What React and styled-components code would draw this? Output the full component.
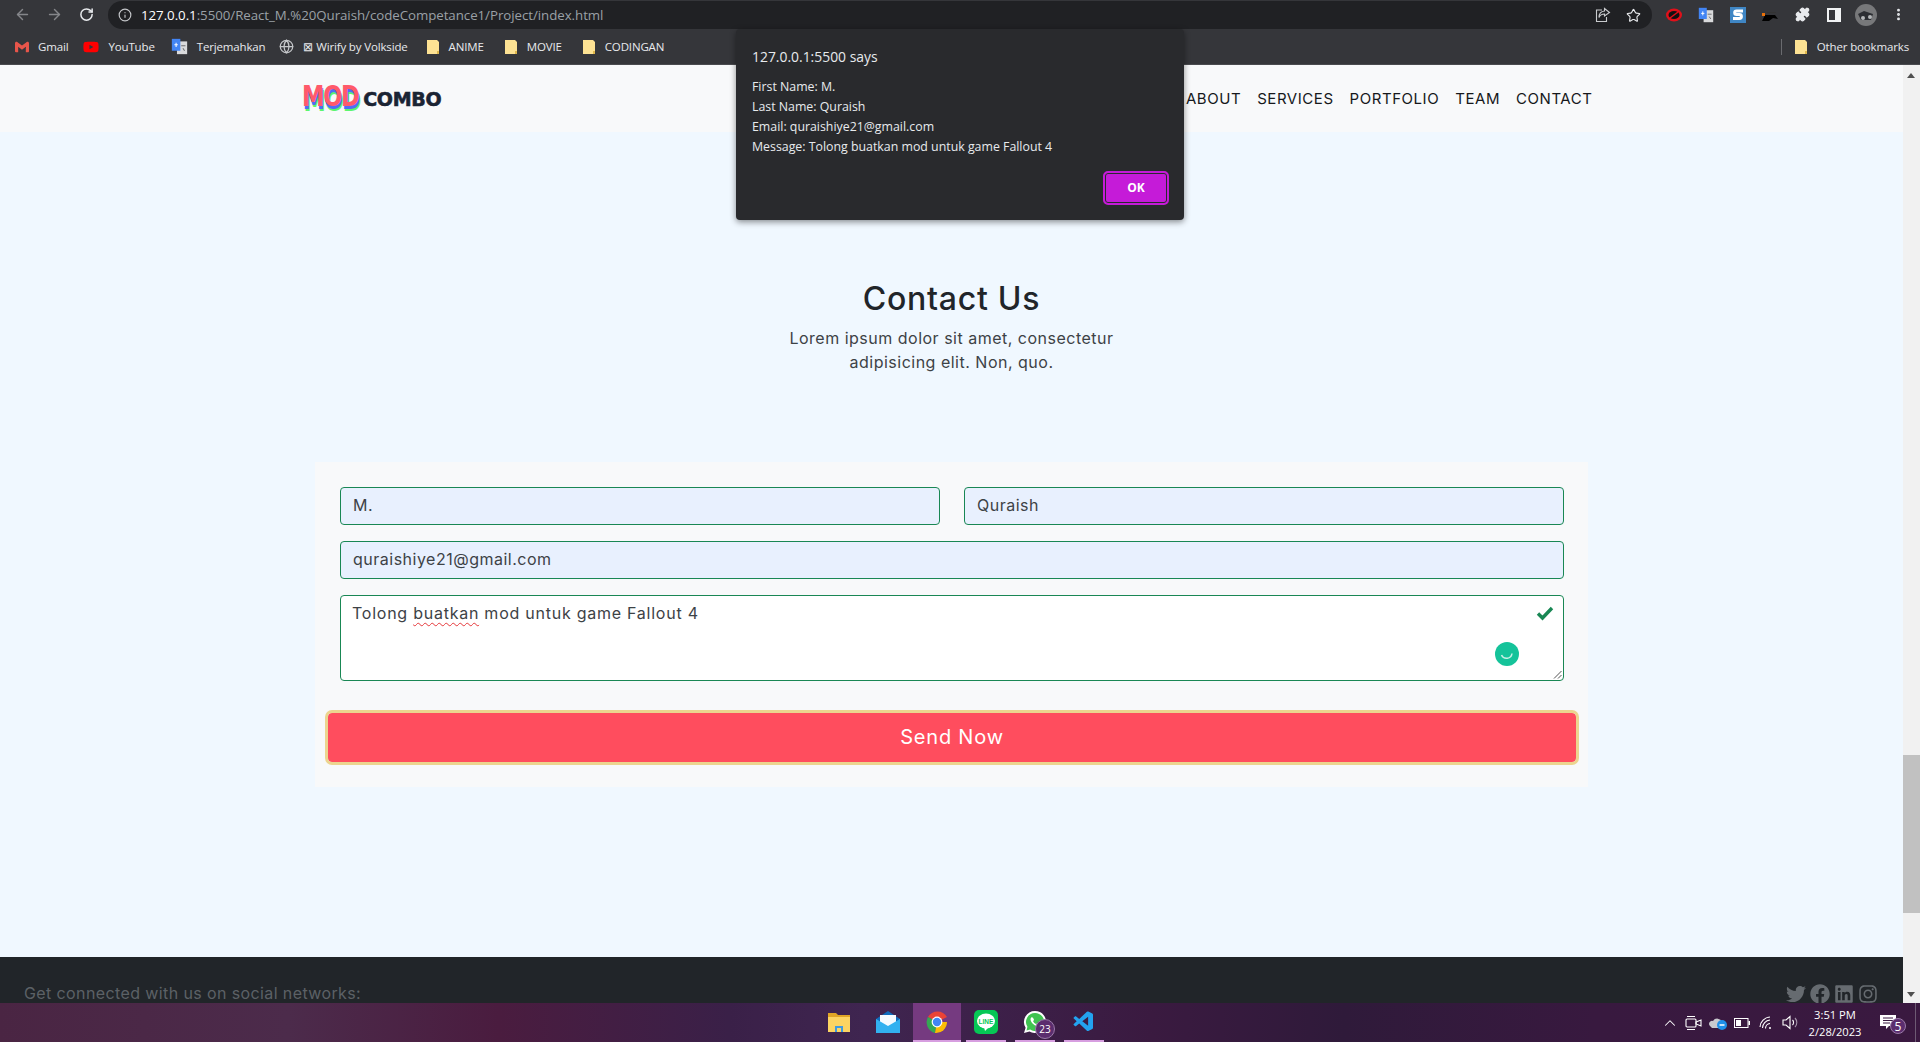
import React from "react";
import styled, { createGlobalStyle } from "styled-components";
import { ArrowLeft, ArrowRight, RotateCw, Info, Star, Puzzle, EllipsisVertical, ChevronUp, Globe } from "lucide-react";
import { FaTwitter, FaFacebook, FaLinkedin, FaInstagram, FaYoutube } from "react-icons/fa";
import { SiGmail } from "react-icons/si";
import { VscVscode } from "react-icons/vsc";

const PAGE_FONT = `"Inter", "Liberation Sans", sans-serif`;
const UI_FONT = `"Open Sans", "Noto Sans", sans-serif`;

const GlobalStyle = createGlobalStyle`
  html, body { margin: 0; height: 100%; overflow: hidden; background: #35363a; }
  * { box-sizing: border-box; }
`;

const Screen = styled.div`
  position: relative;
  width: 1920px;
  height: 1042px;
  display: flex;
  flex-direction: column;
  overflow: hidden;
  font-family: ${PAGE_FONT};
`;

/* browser chrome */
const Toolbar = styled.div`
  height: 29px;
  flex: none;
  display: flex;
  align-items: center;
  padding-left: 6px;
  background: #35363a;
  color: #e8eaed;
`;
const NavIcon = styled.div`
  width: 32px;
  flex: none;
  display: flex;
  align-items: center;
  justify-content: center;
  color: ${(p) => (p.$dim ? "#85868a" : "#e8eaed")};
`;
const AddressBar = styled.div`
  width: 1544px;
  height: 28px;
  margin: 1px 0 0 6px;
  flex: none;
  display: flex;
  align-items: center;
  padding: 0 3px 0 10px;
  border-radius: 14px;
  background: #202124;
`;
const Url = styled.span`
  margin-left: 9px;
  flex: 1;
  font: 13.3px ${UI_FONT};
  letter-spacing: -0.05px;
  color: #9aa0a6;
  b { font-weight: 400; color: #fff; }
`;
const AddressAction = styled.div`
  width: 31px;
  display: flex;
  justify-content: center;
  color: #c9cbce;
`;
const Extensions = styled.div`
  display: flex;
  align-items: center;
  margin-left: 6px;
`;
const Extension = styled.div`
  width: 32px;
  display: flex;
  justify-content: center;
  align-items: center;
`;
const BookmarksBar = styled.div`
  height: 36px;
  flex: none;
  display: flex;
  align-items: center;
  padding: 0 11px 0 15px;
  background: #35363a;
  border-bottom: 1px solid #4a4b4f;
`;
const Bookmark = styled.div`
  display: flex;
  align-items: center;
  gap: ${(p) => p.$gap ?? 9}px;
  margin-right: ${(p) => p.$mr ?? 0}px;
  font: 11.5px ${UI_FONT};
  letter-spacing: -0.15px;
  color: #e8eaed;
  white-space: nowrap;
`;
const BarDivider = styled.div`
  width: 1px;
  height: 16px;
  margin: 0 12px 0 auto;
  background: #6a6b6f;
`;

/* page */
const Viewport = styled.div`
  height: 938px;
  flex: none;
  display: flex;
  overflow: hidden;
`;
const Page = styled.div`
  flex: 1;
  min-width: 0;
  background: #f0f8ff;
  color: #212529;
`;
const Navbar = styled.div`
  height: 67px;
  background: #f8f9fa;
`;
const NavInner = styled.div`
  width: 1320px;
  height: 100%;
  margin: 0 auto;
  padding: 0 19px 0 10px;
  display: flex;
  align-items: center;
  justify-content: space-between;
`;
const Logo = styled.div`
  display: flex;
  align-items: baseline;
  margin-top: -5px;
  font-family: "DejaVu Sans", sans-serif;
  font-weight: 700;
  white-space: nowrap;
`;
const LogoMod = styled.span`
  display: inline-block;
  margin-right: -11px;
  font-size: 28px;
  letter-spacing: -1.4px;
  color: #ff5a6a;
  text-shadow: 1px 3px 0 #4f6df5, 2px 5px 0 #5cf56f;
  transform: scaleX(0.8);
  transform-origin: left center;
`;
const LogoCombo = styled.span`
  margin-left: 2px;
  font-size: 19px;
  letter-spacing: -0.3px;
  color: #1b2433;
  -webkit-text-stroke: 0.6px #1b2433;
`;
const NavLinks = styled.div`
  display: flex;
  gap: 16px;
`;
const NavLink = styled.a`
  font-size: 15px;
  font-weight: 400;
  letter-spacing: 0.55px;
  color: #16181b;
`;
const Section = styled.div`
  padding-top: 148px;
  text-align: center;
`;
const Heading = styled.h2`
  margin: 0 0 8px;
  font-size: 32px;
  line-height: 38px;
  font-weight: 500;
  letter-spacing: 0.75px;
`;
const Lead = styled.p`
  margin: 0;
  font-size: 16px;
  line-height: 24px;
  letter-spacing: 0.5px;
  color: #3d4246;
`;
const Form = styled.div`
  width: 1273px;
  height: 325px;
  margin: 88px auto 170px;
  padding: 25px 12px 0 13px;
  background: #f8f9fa;
`;
const Fields = styled.div`
  padding: 0 12px;
  display: grid;
  grid-template-columns: 1fr 1fr;
  gap: 16px 24px;
`;
const Input = styled.input`
  height: 38px;
  width: 100%;
  padding: 0 12px 2px;
  border: 1px solid #198754;
  border-radius: 4px;
  outline: none;
  background: #e8f0fe;
  font-family: ${PAGE_FONT};
  font-size: 16px;
  letter-spacing: 0.5px;
  color: #3d4246;
  grid-column: ${(p) => (p.$wide ? "1 / 3" : "auto")};
`;
const TextBox = styled.div`
  position: relative;
  grid-column: 1 / 3;
  height: 86px;
  padding: 5px 11px;
  border: 1px solid #198754;
  border-radius: 4px;
  background: #fff;
  font-size: 16px;
  line-height: 24px;
  letter-spacing: 0.75px;
  text-align: left;
  color: #3d4246;
`;
const Misspelt = styled.span`
  text-decoration: underline wavy #e5383b 1px;
  text-underline-offset: 3px;
`;
const ValidTick = styled.svg`
  position: absolute;
  top: 9px;
  right: 9px;
`;
const GrammarlyDot = styled.svg`
  position: absolute;
  top: 46px;
  right: 44px;
`;
const ResizeGrip = styled.svg`
  position: absolute;
  right: 1px;
  bottom: 1px;
`;
const SendButton = styled.button`
  display: block;
  width: 1248px;
  height: 49px;
  margin: 32px 0 0;
  padding: 0 0 2px;
  border: none;
  border-radius: 4px;
  outline: 3px solid #ecd58f;
  background: #ff4d5e;
  color: #fff;
  font-family: ${PAGE_FONT};
  font-size: 20px;
  letter-spacing: 0.8px;
`;
const Footer = styled.div`
  height: 46px;
  padding: 27px 25px 0 24px;
  display: flex;
  justify-content: space-between;
  background: #212529;
  color: #5c6166;
`;
const FooterText = styled.span`
  margin-top: -1px;
  font-size: 16px;
  line-height: 20px;
  letter-spacing: 0.39px;
`;
const Socials = styled.div`
  display: flex;
  gap: 4px;
  color: #666b70;
`;
const Scrollbar = styled.div`
  position: relative;
  width: 17px;
  flex: none;
  background: #f1f1f1;
`;
const ScrollArrow = styled.div`
  position: absolute;
  left: 4px;
  ${(p) => (p.$down ? "bottom: 6px" : "top: 8px")};
  border-left: 4px solid transparent;
  border-right: 4px solid transparent;
  ${(p) => (p.$down ? "border-top: 5px solid #505050" : "border-bottom: 5px solid #505050")};
`;
const ScrollThumb = styled.div`
  position: absolute;
  left: 0;
  right: 0;
  top: 690px;
  height: 158px;
  background: #c1c1c1;
`;

/* alert */
const Dialog = styled.div`
  position: absolute;
  left: 736px;
  top: 29px;
  width: 448px;
  height: 191px;
  padding: 16px;
  border-radius: 4px;
  background: #292a2d;
  box-shadow: 0 2px 6px rgba(0, 0, 0, 0.45);
  color: #e8eaed;
  font-family: ${UI_FONT};
`;
const DialogTitle = styled.div`
  font-size: 13.9px;
  line-height: 24px;
`;
const DialogLines = styled.div`
  margin-top: 8px;
  font-size: 12.35px;
  line-height: 20px;
`;
const OkButton = styled.button`
  position: absolute;
  right: 15px;
  bottom: 15px;
  width: 66px;
  height: 34px;
  padding: 0 0 2px;
  border: 2px solid #c51bd8;
  border-radius: 5px;
  box-shadow: inset 0 0 0 1px #292a2d;
  background: #c51bd8;
  color: #fff;
  font: 700 12px ${UI_FONT};
`;

/* windows taskbar */
const Taskbar = styled.div`
  height: 39px;
  flex: none;
  position: relative;
  display: flex;
  align-items: stretch;
  background: linear-gradient(
    90deg,
    #4a2543 0%,
    #4c2b4b 15%,
    #4a1c3f 26%,
    #3a2048 38%,
    #3f2550 45%,
    #3a1a40 60%,
    #2f1a3a 70%,
    #38193f 83%,
    #3a1940 100%
  );
`;
const TaskApps = styled.div`
  margin-left: 819px;
  display: flex;
  gap: 9px;
`;
const TaskApp = styled.div`
  width: ${(p) => (p.$active ? 48 : 40)}px;
  margin: 0 ${(p) => (p.$active ? -4 : 0)}px;
  display: flex;
  align-items: center;
  justify-content: center;
  position: relative;
  background: ${(p) => (p.$active ? "#753a80" : "transparent")};
  border-bottom: 2px solid ${(p) => (p.$open ? "#d79ee0" : "transparent")};
`;
const TaskBadge = styled.span`
  position: absolute;
  right: ${(p) => p.$right}px;
  bottom: ${(p) => p.$bottom}px;
  width: ${(p) => p.$size}px;
  height: ${(p) => p.$size}px;
  display: flex;
  align-items: center;
  justify-content: center;
  border-radius: 50%;
  background: #5b2d6e;
  border: 1px solid #9a7aa8;
  color: #fff;
  font: 400 ${(p) => (p.$size > 16 ? 10 : 12)}px ${UI_FONT};
`;
const Tray = styled.div`
  margin-left: auto;
  display: flex;
  align-items: center;
  color: #fff;
`;
const TrayIcon = styled.div`
  width: 24px;
  display: flex;
  justify-content: center;
  align-items: center;
`;
const Clock = styled.div`
  width: 66px;
  text-align: center;
  font: 11.2px/17px ${UI_FONT};
`;
const Notify = styled.div`
  position: relative;
  width: 40px;
  display: flex;
  justify-content: center;
`;
const ShowDesktop = styled.div`
  width: 1px;
  height: 100%;
  margin: 0 4px 0 7px;
  background: #6d5a73;
`;

const Folder = () => (
  <svg width="14" height="16" viewBox="0 0 14 16">
    <path d="M1 1h10l2 2v12H1z" fill="#fde293" />
    <path d="M11 15h2v-3h-2z" fill="#e0b84c" />
  </svg>
);

const TranslateIcon = ({ size = 17 }) => (
  <svg width={size} height={size} viewBox="0 0 20 20">
    <rect x="7" y="4" width="12" height="15" fill="#d9dadc" />
    <path d="M1 1h10v14H1z" fill="#4285f4" />
    <path d="M4 8h4M6 5.500v5" stroke="#fff" strokeWidth="1.2" />
    <path d="M12 9h5M14 12l2 3" stroke="#6d6e70" strokeWidth="1.2" />
  </svg>
);

const ChromeLogo = () => (
  <svg width="24" height="24" viewBox="0 0 24 24">
    <path d="M12 12 3 7a11 11 0 0 1 19 0z" fill="#ea4335" />
    <path d="M12 12 3 7a11 11 0 0 0 7 16z" fill="#34a853" />
    <path d="M12 12h10a11 11 0 0 1-12 11z" fill="#fbbc05" />
    <circle cx="12" cy="12" r="5.4" fill="#fff" />
    <circle cx="12" cy="12" r="4.2" fill="#4285f4" />
  </svg>
);

export default function App() {
  return (
    <Screen>
      <GlobalStyle />
      <Toolbar>
        <NavIcon $dim><ArrowLeft size={17} /></NavIcon>
        <NavIcon $dim><ArrowRight size={17} /></NavIcon>
        <NavIcon><RotateCw size={15} strokeWidth={2.4} /></NavIcon>
        <AddressBar>
          <Info size={14} color="#c4c6c9" />
          <Url><b>127.0.0.1</b>:5500/React_M.%20Quraish/codeCompetance1/Project/index.html</Url>
          <AddressAction>
            <svg width="16" height="16" viewBox="0 0 16 16" fill="none" stroke="currentColor" strokeWidth="1.1">
              <path d="M7 3H1.5v11.5h10V10" />
              <path d="M9.5 1.5 14.5 5.5 9.5 9V7C7 7 5 8 4 10.5 4 7 6 4.3 9.5 4z" />
            </svg>
          </AddressAction>
          <AddressAction><Star size={15} color="#e8eaed" strokeWidth={1.8} /></AddressAction>
        </AddressBar>
        <Extensions>
          <Extension>
            <svg width="16" height="14" viewBox="0 0 16 14">
              <ellipse cx="8" cy="7" rx="8" ry="6.5" fill="#e0101a" />
              <ellipse cx="8" cy="7" rx="5.5" ry="4" fill="#111" />
              <path d="M4 10 12 4" stroke="#e0101a" strokeWidth="1.5" />
            </svg>
          </Extension>
          <Extension><TranslateIcon size={16} /></Extension>
          <Extension>
            <svg width="16" height="16" viewBox="0 0 16 16">
              <rect width="16" height="16" fill="#3f86c4" />
              <path d="M13 4H6.5a1.8 1.8 0 0 0 0 3.6h3a1.8 1.8 0 0 1 0 3.8H3" fill="none" stroke="#fff" strokeWidth="3" />
            </svg>
          </Extension>
          <Extension>
            <svg width="16" height="14" viewBox="0 0 16 14">
              <path d="M0 13 3 7h10l3 4-5-1-4 3z" fill="#000" />
              <path d="M0 5h3v3H0z" fill="#e8710a" />
              <path d="M5 4h9v1H5z" fill="#333" />
            </svg>
          </Extension>
          <Extension><Puzzle size={15} fill="#e8eaed" color="#e8eaed" /></Extension>
          <Extension>
            <svg width="14" height="14" viewBox="0 0 14 14">
              <path fillRule="evenodd" d="M0 0h14v14H0zM2 2v10h6V2z" fill="#f1f3f4" />
            </svg>
          </Extension>
          <Extension>
            <svg width="22" height="22" viewBox="0 0 22 22">
              <circle cx="11" cy="11" r="11" fill="#77787a" />
              <path d="M3 10l6-3 9 3-2 6H6z" fill="#2c2e33" />
              <circle cx="8" cy="14" r="2" fill="#b5b7ba" />
              <circle cx="15" cy="13" r="2" fill="#b5b7ba" />
            </svg>
          </Extension>
          <Extension><EllipsisVertical size={15} color="#e8eaed" strokeWidth={2.6} /></Extension>
        </Extensions>
      </Toolbar>
      <BookmarksBar>
        <Bookmark $mr={15}><SiGmail size={14} color="#e8554a" />Gmail</Bookmark>
        <Bookmark $mr={16}><FaYoutube size={16} color="#f00" />YouTube</Bookmark>
        <Bookmark $mr={14}><TranslateIcon />Terjemahkan</Bookmark>
        <Bookmark $gap={9} $mr={18}><Globe size={15} color="#c4c6c9" />⊠ Wirify by Volkside</Bookmark>
        <Bookmark $mr={20}><Folder />ANIME</Bookmark>
        <Bookmark $mr={20}><Folder />MOVIE</Bookmark>
        <Bookmark><Folder />CODINGAN</Bookmark>
        <BarDivider />
        <Bookmark><Folder />Other bookmarks</Bookmark>
      </BookmarksBar>

      <Viewport>
        <Page>
          <Navbar>
            <NavInner>
              <Logo>
                <LogoMod>MOD</LogoMod>
                <LogoCombo>COMBO</LogoCombo>
              </Logo>
              <NavLinks>
                <NavLink>ABOUT</NavLink>
                <NavLink>SERVICES</NavLink>
                <NavLink>PORTFOLIO</NavLink>
                <NavLink>TEAM</NavLink>
                <NavLink>CONTACT</NavLink>
              </NavLinks>
            </NavInner>
          </Navbar>
          <Section>
            <Heading>Contact Us</Heading>
            <Lead>
              Lorem ipsum dolor sit amet, consectetur
              <br />
              adipisicing elit. Non, quo.
            </Lead>
            <Form>
              <Fields>
                <Input readOnly value="M." />
                <Input readOnly value="Quraish" />
                <Input $wide readOnly value="quraishiye21@gmail.com" />
                <TextBox>
                  Tolong <Misspelt>buatkan</Misspelt> mod untuk game Fallout 4
                  <ValidTick width="18" height="16" viewBox="0 0 18 16">
                    <path d="M2 8.5 6.5 13 16 3" fill="none" stroke="#198754" strokeWidth="3.4" />
                  </ValidTick>
                  <GrammarlyDot width="24" height="24" viewBox="0 0 24 24">
                    <circle cx="12" cy="12" r="12" fill="#15c39a" />
                    <path d="M6.5 13a5.5 5.5 0 0 0 10.5-1.5" fill="none" stroke="#c8f0e5" strokeWidth="1.5" />
                  </GrammarlyDot>
                  <ResizeGrip width="9" height="9" viewBox="0 0 9 9">
                    <path d="M1 8.5 8.5 1M5 8.5 8.5 5" stroke="#555" strokeWidth="1" />
                  </ResizeGrip>
                </TextBox>
              </Fields>
              <SendButton>Send Now</SendButton>
            </Form>
          </Section>
          <Footer>
            <FooterText>Get connected with us on social networks:</FooterText>
            <Socials>
              <FaTwitter size={20} />
              <FaFacebook size={20} />
              <FaLinkedin size={20} />
              <FaInstagram size={20} />
            </Socials>
          </Footer>
        </Page>
        <Scrollbar>
          <ScrollArrow />
          <ScrollThumb />
          <ScrollArrow $down />
        </Scrollbar>
      </Viewport>

      <Taskbar>
        <TaskApps>
          <TaskApp>
            <svg width="22" height="20" viewBox="0 0 22 20">
              <path d="M0 1h8l2 2h12v3H0z" fill="#e0a526" />
              <path d="M0 5h22v15H0z" fill="#fcd462" />
              <path d="M7 14h8v6h-2v-4H9v4H7z" fill="#3f9ae0" />
            </svg>
          </TaskApp>
          <TaskApp>
            <svg width="24" height="22" viewBox="0 0 24 22">
              <path d="M12 0 24 8v14H0V8z" fill="#0f6cbd" />
              <path d="M4 4h16v9l-8 5-8-5z" fill="#f5fbff" />
              <path d="M0 8l12 7 12-7v14H0z" fill="#32b1f0" />
            </svg>
          </TaskApp>
          <TaskApp $active $open><ChromeLogo /></TaskApp>
          <TaskApp $open>
            <svg width="24" height="24" viewBox="0 0 24 24">
              <rect width="24" height="24" rx="5" fill="#06c755" />
              <ellipse cx="12" cy="11" rx="9" ry="7.5" fill="#fff" />
              <path d="M10 17l1 4 4-4z" fill="#fff" />
              <text x="12" y="13.5" textAnchor="middle" fontSize="6.5" fontWeight="700" fontFamily="Liberation Sans" fill="#06c755">LINE</text>
            </svg>
          </TaskApp>
          <TaskApp $open>
            <svg width="24" height="24" viewBox="0 0 24 24">
              <path d="M12 1a11 11 0 0 0-9.4 16.7L1 23l5.5-1.5A11 11 0 1 0 12 1z" fill="#fff" />
              <path d="M12 3a9 9 0 0 0-7.6 13.8L3.5 20.5l3.7-1A9 9 0 1 0 12 3z" fill="#40c351" />
              <path d="M8.6 7.2c-.8.6-1.3 1.6-1 2.9.6 2.6 3.5 5.5 6.2 6.2 1.3.3 2.3-.2 2.9-1 .3-.4.2-.9-.2-1.1l-1.8-.9c-.3-.2-.7-.1-.9.2l-.6.7c-1.4-.5-2.6-1.7-3.2-3.1l.7-.6c.3-.2.4-.6.2-.9l-.9-1.9c-.2-.4-.9-.6-1.4-.5z" fill="#fff" />
            </svg>
            <TaskBadge $right={0} $bottom={1} $size={20}>23</TaskBadge>
          </TaskApp>
          <TaskApp $open><VscVscode size={24} color="#23a3f0" /></TaskApp>
        </TaskApps>
        <Tray>
          <TrayIcon><ChevronUp size={18} strokeWidth={1.4} /></TrayIcon>
          <TrayIcon>
            <svg width="18" height="18" viewBox="0 0 18 18" fill="none" stroke="#fff" strokeWidth="1.1">
              <rect x="1" y="5" width="10" height="8" rx="1" />
              <path d="M11 8l5-2v6l-5-2z" />
              <path d="M2 2.5h8M2 15.5h8" />
            </svg>
          </TrayIcon>
          <TrayIcon>
            <svg width="18" height="14" viewBox="0 0 18 14">
              <path d="M1 10a3 3 0 0 1 3-5 5 5 0 0 1 9 1 3 3 0 0 1 1 6H3z" fill="#c9c9cf" />
              <circle cx="13" cy="9" r="5" fill="#1f8fe8" />
              <path d="M10.5 9h5" stroke="#fff" strokeWidth="1.5" />
            </svg>
          </TrayIcon>
          <TrayIcon>
            <svg width="16" height="10" viewBox="0 0 16 10" fill="none">
              <rect x=".5" y=".5" width="13.5" height="9" stroke="#fff" />
              <rect x="2" y="2" width="5" height="6" fill="#fff" />
              <rect x="14.5" y="3" width="1.5" height="4" fill="#fff" />
            </svg>
          </TrayIcon>
          <TrayIcon>
            <svg width="15" height="15" viewBox="0 0 15 15" fill="none" stroke="#fff" strokeWidth="1.1">
              <path d="M1 12A10.5 10.5 0 0 1 11 2" />
              <path d="M3.5 13A8 8 0 0 1 11 5" />
              <path d="M6.5 13.5A5 5 0 0 1 11 8.5" />
              <circle cx="11" cy="13" r="1" fill="#fff" stroke="none" />
            </svg>
          </TrayIcon>
          <TrayIcon>
            <svg width="17" height="15" viewBox="0 0 17 15" fill="none" stroke="#fff" strokeWidth="1.1">
              <path d="M1 5h3l4-3.5v12L4 10H1z" />
              <path d="M10.5 5a3.5 3.5 0 0 1 0 5" />
              <path d="M13 3a6.5 6.500 0 0 1 0 9" stroke="#a595aa" />
            </svg>
          </TrayIcon>
          <Clock>3:51 PM<br />2/28/2023</Clock>
          <Notify>
            <svg width="16" height="15" viewBox="0 0 16 15">
              <path d="M0 0h16v11h-7l-3 3v-3H0z" fill="#fff" />
              <path d="M3 3h10M3 5.5h10M3 8h7" stroke="#3a1940" strokeWidth="1" />
            </svg>
            <TaskBadge $right={2} $bottom={-4} $size={16}>5</TaskBadge>
          </Notify>
          <ShowDesktop />
        </Tray>
      </Taskbar>

      <Dialog>
        <DialogTitle>127.0.0.1:5500 says</DialogTitle>
        <DialogLines>
          First Name: M.<br />
          Last Name: Quraish<br />
          Email: quraishiye21@gmail.com<br />
          Message: Tolong buatkan mod untuk game Fallout 4
        </DialogLines>
        <OkButton>OK</OkButton>
      </Dialog>
    </Screen>
  );
}
